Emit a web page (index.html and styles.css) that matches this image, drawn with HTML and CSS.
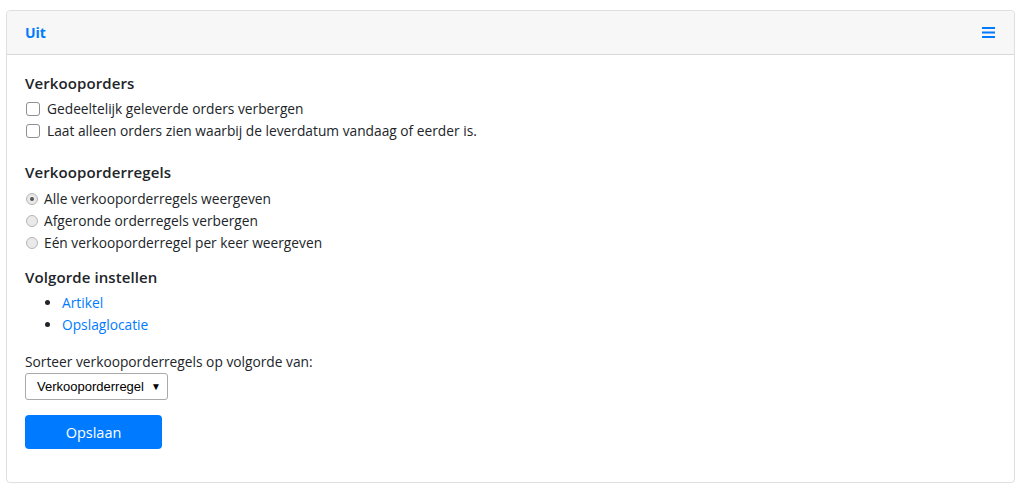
FILE: index.html
```html
<!DOCTYPE html>
<html lang="nl">

<head>
  <meta charset="UTF-8" />
  <meta name="viewport" content="width=device-width, initial-scale=1.0" />
  <title>Uit</title>
  <link rel="stylesheet" href="styles.css">
</head>

<body>
  <div class="card">

    <div class="card-header">
      <span class="card-title">Uit</span>
      <svg class="menu-icon" width="13" height="11" viewBox="0 0 13 11">
        <rect x="0" y="0" width="13" height="2" />
        <rect x="0" y="4.5" width="13" height="2" />
        <rect x="0" y="9" width="13" height="2" />
      </svg>
    </div>

    <div class="card-body">

      <div class="group">
        <h4>Verkooporders</h4>
        <label class="check"><span class="box"></span>Gedeeltelijk geleverde orders verbergen</label>
        <label class="check"><span class="box"></span>Laat alleen orders zien waarbij de leverdatum vandaag of eerder is.</label>
      </div>

      <div class="group radios">
        <h4>Verkooporderregels</h4>
        <label class="radio"><span class="dot checked"></span>Alle verkooporderregels weergeven</label>
        <label class="radio"><span class="dot"></span>Afgeronde orderregels verbergen</label>
        <label class="radio"><span class="dot"></span>Eén verkooporderregel per keer weergeven</label>
      </div>

      <div class="group order">
        <h4>Volgorde instellen</h4>
        <ul class="order-list">
          <li><a href="#">Artikel</a></li>
          <li><a href="#">Opslaglocatie</a></li>
        </ul>
      </div>

      <div class="group sort">
        <p class="sort-label">Sorteer verkooporderregels op volgorde van:</p>
        <div class="select">
          <span>Verkooporderregel</span>
          <span class="caret">&#9660;</span>
        </div>
      </div>

      <button class="btn-save">Opslaan</button>

    </div>

  </div>
</body>

</html>
```

FILE: styles.css
```css
* {
  box-sizing: border-box;
}

body {
  margin: 0;
  padding: 10px 9px 0 6px;
  font-family: "Open Sans", "Noto Sans", sans-serif;
  font-size: 13.75px;
  line-height: 22px;
  color: #212529;
  background: #fff;
}

.card {
  border: 1px solid rgba(0, 0, 0, 0.125);
  border-radius: 4px;
  height: 473px;
}

.card-header {
  height: 44px;
  padding: 0 19px 0 18px;
  background: #f7f7f7;
  border-bottom: 1px solid rgba(0, 0, 0, 0.125);
  border-radius: 4px 4px 0 0;
  display: flex;
  align-items: center;
  justify-content: space-between;
}

.card-title {
  color: #007bff;
  font-size: 14px;
  font-weight: 700;
}

.menu-icon {
  fill: #007bff;
  display: block;
}

.card-body {
  padding: 17px 18px;
}

h4 {
  margin: 0 0 4px 0;
  font-size: 15px;
  font-weight: 600;
  letter-spacing: 0.1px;
}

.group {
  margin-bottom: 19px;
}

.radios {
  margin-bottom: 12px;
}

.radios h4 {
  margin-bottom: 5px;
}

.order {
  margin-bottom: 15px;
}

.check,
.radio {
  display: flex;
  align-items: center;
  cursor: pointer;
}

.box {
  width: 14px;
  height: 14px;
  margin: 0 7px 0 1px;
  border: 1px solid #8f8f8f;
  border-radius: 3px;
  background: #fff;
}

.dot {
  width: 12px;
  height: 12px;
  margin: 0 6px 0 1px;
  border: 1px solid #b5b5b5;
  border-radius: 50%;
  background: #e9e9e9;
  position: relative;
}

.dot.checked::after {
  content: "";
  position: absolute;
  left: 3px;
  top: 3px;
  width: 4px;
  height: 4px;
  border-radius: 50%;
  background: #555;
}

.order-list {
  margin: 0;
  padding-left: 37px;
}

.order-list a {
  color: #007bff;
  text-decoration: none;
}

.sort-label {
  margin: 0;
}

.sort {
  margin-bottom: 15px;
}

.select {
  width: 143px;
  height: 27px;
  padding: 0 6px 0 11px;
  border: 1px solid #a9a9a9;
  border-radius: 3px;
  display: flex;
  align-items: center;
  justify-content: space-between;
  font-family: "Liberation Sans", Arial, sans-serif;
  font-size: 13px;
  color: #000;
}

.caret {
  font-size: 10px;
}

.btn-save {
  width: 137px;
  height: 34px;
  appearance: none;
  border: none;
  border-radius: 4px;
  background: #007bff;
  color: #fff;
  font-family: inherit;
  font-size: 14.5px;
  cursor: pointer;
}
```
